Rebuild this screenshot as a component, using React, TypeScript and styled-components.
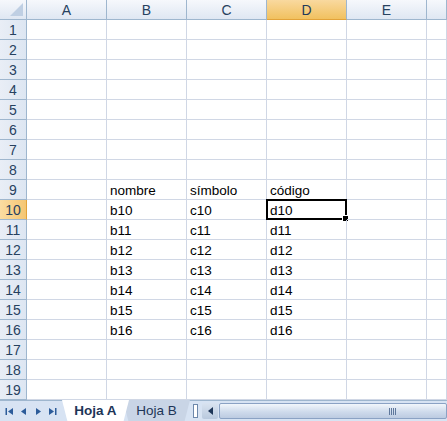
import React from "react"
import styled, { createGlobalStyle, css } from "styled-components"

const GlobalStyle = createGlobalStyle`
    html, body {
        margin: 0;
        padding: 0;
        background: #ffffff;
        overflow: hidden;
    }
    body {
        font-family: "Liberation Sans", Arial, sans-serif;
    }
`

const COLS = ["A", "B", "C", "D", "E", ""]
const ACTIVE_COL = "D"
const ACTIVE_ROW = 10

const data: Record<number, Record<string, string>> = {
    9: { B: "nombre", C: "símbolo", D: "código" },
}
for (let r = 10; r <= 16; r++) {
    data[r] = { B: `b${r}`, C: `c${r}`, D: `d${r}` }
}

const Window = styled.div`
    width: 447px;
    height: 421px;
    display: flex;
    flex-direction: column;
    overflow: hidden;
`

const Grid = styled.div`
    display: grid;
    grid-template-columns: 27px repeat(5, 80px) 1fr;
    grid-auto-rows: 20px;
    flex: 0 0 400px;
`

const headerBg = css`
    background: linear-gradient(#f6f8fc, #dfe7f2);
    color: #27415f;
    font-size: 14px;
    display: flex;
    align-items: center;
    justify-content: center;
`

const Corner = styled.div`
    ${headerBg};
    border-right: 1px solid #9eb6ce;
    border-bottom: 1px solid #9eb6ce;
    box-sizing: border-box;
    position: relative;
    &::after {
        content: "";
        position: absolute;
        right: 3px;
        bottom: 3px;
        border-left: 13px solid transparent;
        border-bottom: 13px solid #bfcfe3;
    }
`

const ColHead = styled.div<{ $active?: boolean }>`
    ${headerBg};
    border-right: 1px solid #9eb6ce;
    border-bottom: 1px solid #9eb6ce;
    box-sizing: border-box;
    ${({ $active }) =>
        $active &&
        css`
            background: linear-gradient(#f9d99f, #f1c15f);
            color: #1f3a5a;
            border-bottom-color: #e2a33a;
        `}
`

const RowHead = styled.div<{ $active?: boolean }>`
    ${headerBg};
    background: linear-gradient(90deg, #e9eef6, #dde6f2);
    border-right: 1px solid #9eb6ce;
    border-bottom: 1px solid #9eb6ce;
    box-sizing: border-box;
    ${({ $active }) =>
        $active &&
        css`
            background: linear-gradient(90deg, #fbdca2, #f5c672);
            border-right-color: #e2a33a;
        `}
`

const Cell = styled.div`
    border-right: 1px solid #d0d7e5;
    border-bottom: 1px solid #d0d7e5;
    box-sizing: border-box;
    font-size: 13.5px;
    color: #000;
    padding: 2px 3px 0;
    line-height: 18px;
    white-space: nowrap;
    position: relative;
`

const Selection = styled.div`
    position: absolute;
    left: -1px;
    top: -1px;
    right: -1px;
    bottom: -1px;
    border: 2px solid #000;
    pointer-events: none;
    &::after {
        content: "";
        position: absolute;
        right: -4px;
        bottom: -4px;
        width: 5px;
        height: 5px;
        background: #000;
        border: 1px solid #fff;
    }
`

const TabBar = styled.div`
    flex: 1;
    display: flex;
    align-items: stretch;
    background: #d7e3f3;
    border-top: 1px solid #9eb6ce;
    box-sizing: border-box;
`

const Nav = styled.div`
    width: 62px;
    display: flex;
    align-items: center;
    justify-content: space-around;
    padding: 0 2px;
    box-sizing: border-box;
`

const NavIcon = styled.svg`
    width: 9px;
    height: 9px;
    fill: #2c5c9a;
`

const Tab = styled.div<{ $active?: boolean }>`
    position: relative;
    width: 67px;
    margin-right: -6px;
    display: flex;
    align-items: center;
    justify-content: center;
    font-size: 13.5px;
    color: #1d3557;
    clip-path: polygon(0 0, 100% 0, 92% 100%, 8% 100%);
    background: ${({ $active }) => ($active ? "#ffffff" : "#c9d5e6")};
    font-weight: ${({ $active }) => ($active ? 700 : 400)};
    z-index: ${({ $active }) => ($active ? 2 : 1)};
    margin-top: -1px;
`

const Splitter = styled.div`
    width: 10px;
    margin-left: 6px;
    display: flex;
    align-items: center;
    justify-content: center;
    &::before {
        content: "";
        width: 3px;
        height: 12px;
        background: #fff;
        border: 1px solid #6d88ab;
    }
`

const Scroll = styled.div`
    flex: 1;
    display: flex;
    padding: 2px 0 2px 2px;
    box-sizing: border-box;
`

const ScrollBtn = styled.div`
    width: 16px;
    display: flex;
    align-items: center;
    justify-content: center;
    background: linear-gradient(#d9e3f0, #b9c9de);
    border-radius: 2px;
    svg {
        width: 5px;
        height: 8px;
        fill: #1d3557;
    }
`

const Thumb = styled.div`
    flex: 1;
    margin-left: 1px;
    border: 1px solid #8ba2c4;
    border-radius: 2px;
    background: linear-gradient(#f2f6fb, #cfdbec 55%, #bccbe1);
    display: flex;
    align-items: center;
    justify-content: flex-end;
    padding-right: 50px;
`

const Grip = styled.div`
    display: flex;
    gap: 1px;
    span {
        width: 1px;
        height: 7px;
        background: #5f789c;
    }
`

const First = () => (
    <NavIcon viewBox="0 0 9 9">
        <rect x="0.5" y="1" width="1.5" height="7" />
        <polygon points="8,1 3,4.5 8,8" />
    </NavIcon>
)
const Prev = () => (
    <NavIcon viewBox="0 0 9 9">
        <polygon points="7,1 2,4.5 7,8" />
    </NavIcon>
)
const Next = () => (
    <NavIcon viewBox="0 0 9 9">
        <polygon points="2,1 7,4.5 2,8" />
    </NavIcon>
)
const Last = () => (
    <NavIcon viewBox="0 0 9 9">
        <polygon points="1,1 6,4.5 1,8" />
        <rect x="7" y="1" width="1.5" height="7" />
    </NavIcon>
)

export default function App() {
    const rows = Array.from({ length: 19 }, (_, i) => i + 1)
    return (
        <Window>
            <GlobalStyle />
            <Grid>
                <Corner />
                {COLS.map((c, i) => (
                    <ColHead key={i} $active={c === ACTIVE_COL}>
                        {c}
                    </ColHead>
                ))}
                {rows.map((r) => (
                    <React.Fragment key={r}>
                        <RowHead $active={r === ACTIVE_ROW}>{r}</RowHead>
                        {COLS.map((c, i) => (
                            <Cell key={i}>
                                {data[r]?.[c] ?? ""}
                                {r === ACTIVE_ROW && c === ACTIVE_COL && <Selection />}
                            </Cell>
                        ))}
                    </React.Fragment>
                ))}
            </Grid>
            <TabBar>
                <Nav>
                    <First />
                    <Prev />
                    <Next />
                    <Last />
                </Nav>
                <Tab $active>Hoja A</Tab>
                <Tab>Hoja B</Tab>
                <Splitter />
                <Scroll>
                    <ScrollBtn>
                        <svg viewBox="0 0 5 8">
                            <polygon points="5,0 0,4 5,8" />
                        </svg>
                    </ScrollBtn>
                    <Thumb>
                        <Grip>
                            <span />
                            <span />
                            <span />
                            <span />
                        </Grip>
                    </Thumb>
                </Scroll>
            </TabBar>
        </Window>
    )
}
